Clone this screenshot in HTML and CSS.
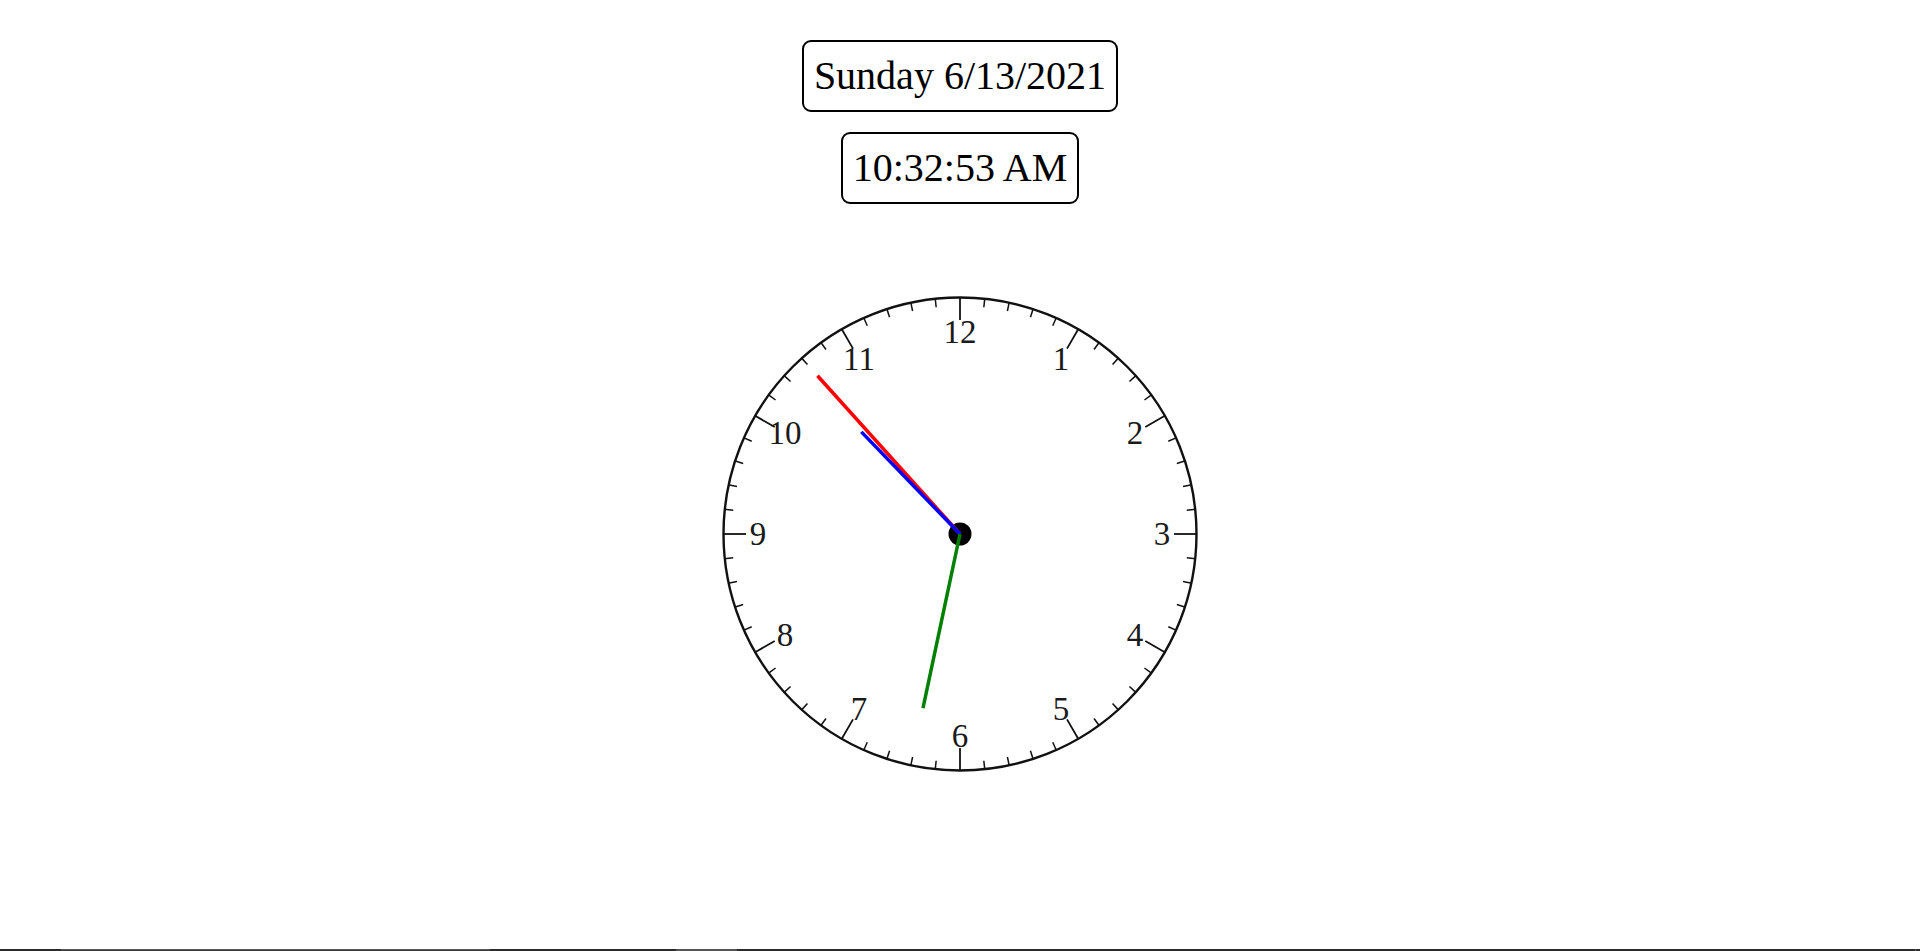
FILE: index.html
```html
<!DOCTYPE html>
<html>
<head>
<meta charset="utf-8">
<title>Clock</title>
<link rel="stylesheet" href="styles.css">
</head>
<body>
<main class="page">
  <div class="readout">Sunday 6/13/2021</div>
  <div class="readout">10:32:53 AM</div>
  <svg class="clock" width="500" height="500" viewBox="-250 -250 500 500">
    <circle class="face" cx="0" cy="0" r="236.5"/>
    <g class="ticks">
      <line class="major" x1="0" y1="-237" x2="0" y2="-214" transform="rotate(0)"/>
      <line x1="0" y1="-237" x2="0" y2="-228" transform="rotate(6)"/>
      <line x1="0" y1="-237" x2="0" y2="-228" transform="rotate(12)"/>
      <line x1="0" y1="-237" x2="0" y2="-228" transform="rotate(18)"/>
      <line x1="0" y1="-237" x2="0" y2="-228" transform="rotate(24)"/>
      <line class="major" x1="0" y1="-237" x2="0" y2="-214" transform="rotate(30)"/>
      <line x1="0" y1="-237" x2="0" y2="-228" transform="rotate(36)"/>
      <line x1="0" y1="-237" x2="0" y2="-228" transform="rotate(42)"/>
      <line x1="0" y1="-237" x2="0" y2="-228" transform="rotate(48)"/>
      <line x1="0" y1="-237" x2="0" y2="-228" transform="rotate(54)"/>
      <line class="major" x1="0" y1="-237" x2="0" y2="-214" transform="rotate(60)"/>
      <line x1="0" y1="-237" x2="0" y2="-228" transform="rotate(66)"/>
      <line x1="0" y1="-237" x2="0" y2="-228" transform="rotate(72)"/>
      <line x1="0" y1="-237" x2="0" y2="-228" transform="rotate(78)"/>
      <line x1="0" y1="-237" x2="0" y2="-228" transform="rotate(84)"/>
      <line class="major" x1="0" y1="-237" x2="0" y2="-214" transform="rotate(90)"/>
      <line x1="0" y1="-237" x2="0" y2="-228" transform="rotate(96)"/>
      <line x1="0" y1="-237" x2="0" y2="-228" transform="rotate(102)"/>
      <line x1="0" y1="-237" x2="0" y2="-228" transform="rotate(108)"/>
      <line x1="0" y1="-237" x2="0" y2="-228" transform="rotate(114)"/>
      <line class="major" x1="0" y1="-237" x2="0" y2="-214" transform="rotate(120)"/>
      <line x1="0" y1="-237" x2="0" y2="-228" transform="rotate(126)"/>
      <line x1="0" y1="-237" x2="0" y2="-228" transform="rotate(132)"/>
      <line x1="0" y1="-237" x2="0" y2="-228" transform="rotate(138)"/>
      <line x1="0" y1="-237" x2="0" y2="-228" transform="rotate(144)"/>
      <line class="major" x1="0" y1="-237" x2="0" y2="-214" transform="rotate(150)"/>
      <line x1="0" y1="-237" x2="0" y2="-228" transform="rotate(156)"/>
      <line x1="0" y1="-237" x2="0" y2="-228" transform="rotate(162)"/>
      <line x1="0" y1="-237" x2="0" y2="-228" transform="rotate(168)"/>
      <line x1="0" y1="-237" x2="0" y2="-228" transform="rotate(174)"/>
      <line class="major" x1="0" y1="-237" x2="0" y2="-214" transform="rotate(180)"/>
      <line x1="0" y1="-237" x2="0" y2="-228" transform="rotate(186)"/>
      <line x1="0" y1="-237" x2="0" y2="-228" transform="rotate(192)"/>
      <line x1="0" y1="-237" x2="0" y2="-228" transform="rotate(198)"/>
      <line x1="0" y1="-237" x2="0" y2="-228" transform="rotate(204)"/>
      <line class="major" x1="0" y1="-237" x2="0" y2="-214" transform="rotate(210)"/>
      <line x1="0" y1="-237" x2="0" y2="-228" transform="rotate(216)"/>
      <line x1="0" y1="-237" x2="0" y2="-228" transform="rotate(222)"/>
      <line x1="0" y1="-237" x2="0" y2="-228" transform="rotate(228)"/>
      <line x1="0" y1="-237" x2="0" y2="-228" transform="rotate(234)"/>
      <line class="major" x1="0" y1="-237" x2="0" y2="-214" transform="rotate(240)"/>
      <line x1="0" y1="-237" x2="0" y2="-228" transform="rotate(246)"/>
      <line x1="0" y1="-237" x2="0" y2="-228" transform="rotate(252)"/>
      <line x1="0" y1="-237" x2="0" y2="-228" transform="rotate(258)"/>
      <line x1="0" y1="-237" x2="0" y2="-228" transform="rotate(264)"/>
      <line class="major" x1="0" y1="-237" x2="0" y2="-214" transform="rotate(270)"/>
      <line x1="0" y1="-237" x2="0" y2="-228" transform="rotate(276)"/>
      <line x1="0" y1="-237" x2="0" y2="-228" transform="rotate(282)"/>
      <line x1="0" y1="-237" x2="0" y2="-228" transform="rotate(288)"/>
      <line x1="0" y1="-237" x2="0" y2="-228" transform="rotate(294)"/>
      <line class="major" x1="0" y1="-237" x2="0" y2="-214" transform="rotate(300)"/>
      <line x1="0" y1="-237" x2="0" y2="-228" transform="rotate(306)"/>
      <line x1="0" y1="-237" x2="0" y2="-228" transform="rotate(312)"/>
      <line x1="0" y1="-237" x2="0" y2="-228" transform="rotate(318)"/>
      <line x1="0" y1="-237" x2="0" y2="-228" transform="rotate(324)"/>
      <line class="major" x1="0" y1="-237" x2="0" y2="-214" transform="rotate(330)"/>
      <line x1="0" y1="-237" x2="0" y2="-228" transform="rotate(336)"/>
      <line x1="0" y1="-237" x2="0" y2="-228" transform="rotate(342)"/>
      <line x1="0" y1="-237" x2="0" y2="-228" transform="rotate(348)"/>
      <line x1="0" y1="-237" x2="0" y2="-228" transform="rotate(354)"/>
    </g>
    <g class="numbers">
      <text x="101" y="-174.9" dy="0.34em">1</text>
      <text x="174.9" y="-101" dy="0.34em">2</text>
      <text x="202" y="0" dy="0.34em">3</text>
      <text x="174.9" y="101" dy="0.34em">4</text>
      <text x="101" y="174.9" dy="0.34em">5</text>
      <text x="0" y="202" dy="0.34em">6</text>
      <text x="-101" y="174.9" dy="0.34em">7</text>
      <text x="-174.9" y="101" dy="0.34em">8</text>
      <text x="-202" y="0" dy="0.34em">9</text>
      <text x="-174.9" y="-101" dy="0.34em">10</text>
      <text x="-101" y="-174.9" dy="0.34em">11</text>
      <text x="0" y="-202" dy="0.34em">12</text>
    </g>
    <circle class="hub" cx="0" cy="0" r="11.5"/>
    <line class="hand second" x1="0" y1="0" x2="0" y2="-213" transform="rotate(318)"/>
    <line class="hand hour" x1="0" y1="0" x2="0" y2="-142" transform="rotate(316)"/>
    <line class="hand minute" x1="0" y1="0" x2="0" y2="-178" transform="rotate(192)"/>
  </svg>
</main>
<footer class="taskbar">
  <span class="tb-gap tb-gap-a"></span>
  <span class="tb-seg tb-seg-a"></span>
  <span class="tb-gap tb-gap-b"></span>
  <span class="tb-seg tb-seg-b"></span>
  <span class="tb-gap tb-gap-c"></span>
  <span class="tb-tick"></span>
  <span class="tb-gap tb-gap-d"></span>
</footer>
</body>
</html>
```

FILE: styles.css
```css
html, body {
  margin: 0;
  padding: 0;
  background: #ffffff;
}

body {
  font-family: "Liberation Serif", "Times New Roman", serif;
  color: #000;
  height: 100vh;
  display: flex;
  flex-direction: column;
  overflow: hidden;
}

.page {
  flex: 1;
  display: flex;
  flex-direction: column;
  align-items: center;
  padding-top: 40px;
  gap: 20px;
}

.readout {
  font-size: 40px;
  line-height: 48px;
  padding: 10px;
  border: 2px solid #000;
  border-radius: 9px;
  white-space: nowrap;
}

.clock {
  display: block;
  margin-top: 60px;
  overflow: visible;
}

.face {
  fill: none;
  stroke: #111;
  stroke-width: 2.4;
}

.ticks line {
  stroke: #111;
  stroke-width: 1.5;
}

.ticks line.major {
  stroke-width: 1.8;
}

.numbers text {
  font-family: "Liberation Serif", "Times New Roman", serif;
  font-size: 33px;
  fill: #1a1a1a;
  text-anchor: middle;
}

.hub {
  fill: #000;
}

.hand {
  stroke-width: 3.5;
  stroke-linecap: butt;
}

.second { stroke: #ff0000; }
.hour { stroke: #0000ff; }
.minute { stroke: #008000; }

.taskbar {
  flex: 0 0 2px;
  display: flex;
  background: #2b2b2b;
}

.tb-gap { display: block; }
.tb-gap-a { width: 61px; }
.tb-seg-a {
  display: block;
  width: 429px;
  background: #3c3c3c;
  border-top: 1px solid #555;
  box-sizing: border-box;
}
.tb-gap-b { width: 186px; }
.tb-seg-b {
  display: block;
  width: 61px;
  background: #555;
}
.tb-gap-c { flex: 1; }
.tb-tick {
  display: block;
  width: 1px;
  background: #666;
}
.tb-gap-d { width: 4px; }
```
